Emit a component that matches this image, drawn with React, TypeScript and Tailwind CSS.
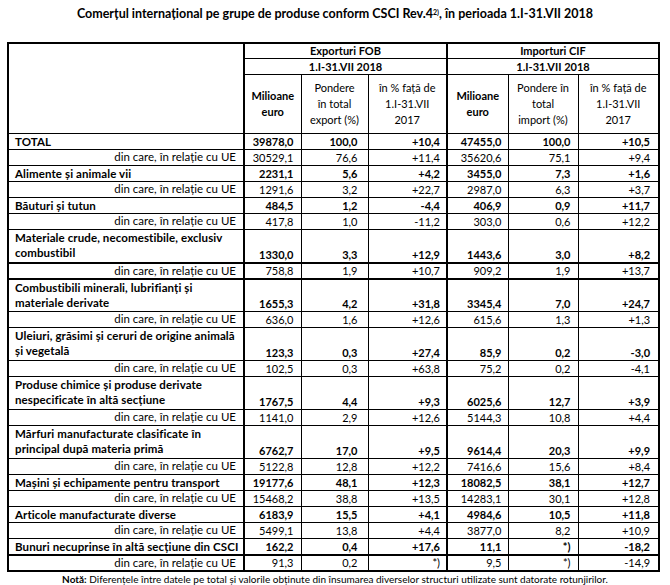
import React from 'react';

type Row = {
    label: string[];
    din?: boolean;
    thick?: boolean;
    v: string[];
};

const DIN = ['din care, în relație cu UE'];

const rows: Row[] = [
    { label: ['TOTAL'], v: ['39878,0', '100,0', '+10,4', '47455,0', '100,0', '+10,5'] },
    { label: DIN, din: true, v: ['30529,1', '76,6', '+11,4', '35620,6', '75,1', '+9,4'] },
    { label: ['Alimente și animale vii'], v: ['2231,1', '5,6', '+4,2', '3455,0', '7,3', '+1,6'] },
    { label: DIN, din: true, v: ['1291,6', '3,2', '+22,7', '2987,0', '6,3', '+3,7'] },
    { label: ['Băuturi și tutun'], v: ['484,5', '1,2', '-4,4', '406,9', '0,9', '+11,7'] },
    { label: DIN, din: true, v: ['417,8', '1,0', '-11,2', '303,0', '0,6', '+12,2'] },
    { label: ['Materiale crude, necomestibile, exclusiv', 'combustibil'], thick: true, v: ['1330,0', '3,3', '+12,9', '1443,6', '3,0', '+8,2'] },
    { label: DIN, din: true, thick: true, v: ['758,8', '1,9', '+10,7', '909,2', '1,9', '+13,7'] },
    { label: ['Combustibili minerali, lubrifianți și', 'materiale derivate'], v: ['1655,3', '4,2', '+31,8', '3345,4', '7,0', '+24,7'] },
    { label: DIN, din: true, v: ['636,0', '1,6', '+12,6', '615,6', '1,3', '+1,3'] },
    { label: ['Uleiuri, grăsimi și ceruri de origine animală', 'și vegetală'], v: ['123,3', '0,3', '+27,4', '85,9', '0,2', '-3,0'] },
    { label: DIN, din: true, v: ['102,5', '0,3', '+63,8', '75,2', '0,2', '-4,1'] },
    { label: ['Produse chimice și produse derivate', 'nespecificate în altă secțiune'], v: ['1767,5', '4,4', '+9,3', '6025,6', '12,7', '+3,9'] },
    { label: DIN, din: true, v: ['1141,0', '2,9', '+12,6', '5144,3', '10,8', '+4,4'] },
    { label: ['Mărfuri manufacturate clasificate în', 'principal după materia primă'], v: ['6762,7', '17,0', '+9,5', '9614,4', '20,3', '+9,9'] },
    { label: DIN, din: true, v: ['5122,8', '12,8', '+12,2', '7416,6', '15,6', '+8,4'] },
    { label: ['Mașini și echipamente pentru transport'], v: ['19177,6', '48,1', '+12,3', '18082,5', '38,1', '+12,7'] },
    { label: DIN, din: true, v: ['15468,2', '38,8', '+13,5', '14283,1', '30,1', '+12,8'] },
    { label: ['Articole manufacturate diverse'], v: ['6183,9', '15,5', '+4,1', '4984,6', '10,5', '+11,8'] },
    { label: DIN, din: true, v: ['5499,1', '13,8', '+4,4', '3877,0', '8,2', '+10,9'] },
    { label: ['Bunuri necuprinse în altă secțiune din CSCI'], thick: true, v: ['162,2', '0,4', '+17,6', '11,1', '*)', '-18,2'] },
    { label: DIN, din: true, v: ['91,3', '0,2', '*)', '9,5', '*)', '-14,9'] },
];

// right padding per numeric column
const pads = ['pr-[7px]', 'pr-[10px]', 'pr-[6px]', 'pr-[6px]', 'pr-[7px]', 'pr-[8px]'];

const App = () => {
    return (
        <div className="w-[670px] h-[585px] bg-white text-black font-['Lato',sans-serif] overflow-hidden">
            <h1 className="pt-[6px] h-[42px] text-center text-[12.5px] font-bold leading-[16px]">
                Comerțul internațional pe grupe de produse conform CSCI Rev.4<sup className="text-[7px]">2)</sup>, în perioada 1.I-31.VII 2018
            </h1>

            <table className="ml-[7px] w-[651px] table-fixed border-collapse border-2 border-black text-[11px] leading-[14px]">
                <colgroup>
                    <col className="w-[236px]" />
                    <col className="w-[57px]" />
                    <col className="w-[67px]" />
                    <col className="w-[79px]" />
                    <col className="w-[61px]" />
                    <col className="w-[70px]" />
                    <col className="w-[81px]" />
                </colgroup>
                <thead>
                    <tr className="h-[15px]">
                        <td rowSpan={3} className="border border-r-2 border-black"></td>
                        <td colSpan={3} className="border border-r-2 border-black text-center font-bold">Exporturi FOB</td>
                        <td colSpan={3} className="border border-black text-center font-bold">Importuri CIF</td>
                    </tr>
                    <tr className="h-[16px]">
                        <td colSpan={3} className="border border-r-2 border-black text-center font-bold">1.I-31.VII 2018</td>
                        <td colSpan={3} className="border border-black text-center font-bold">1.I-31.VII 2018</td>
                    </tr>
                    <tr className="h-[59px] leading-[16px]">
                        <td className="border border-black text-center font-bold">Milioane<br />euro</td>
                        <td className="border border-black text-center">Pondere<br />în total<br />export (%)</td>
                        <td className="border border-r-2 border-black text-center">în % față de<br />1.I-31.VII<br />2017</td>
                        <td className="border border-black text-center font-bold">Milioane<br />euro</td>
                        <td className="border border-black text-center">Pondere în<br />total<br />import (%)</td>
                        <td className="border border-black text-center">în % față de<br />1.I-31.VII<br />2017</td>
                    </tr>
                </thead>
                <tbody>
                    {rows.map((r, i) => {
                        const b = r.thick ? 'border-b-2' : '';
                        const tall = r.label.length > 1;
                        return (
                            <tr key={i} className={tall ? 'h-[33px]' : 'h-[16px]'}>
                                <td
                                    className={`border border-r-2 border-black ${b} align-top whitespace-nowrap ${
                                        r.din
                                            ? 'text-right pr-[7px] text-[11.5px]'
                                            : 'text-left pl-[6px] font-bold text-[11.5px] tracking-[0.1px] leading-[15px]'
                                    }`}
                                >
                                    {r.label.map((l, k) => (
                                        <div key={k}>{l}</div>
                                    ))}
                                </td>
                                {r.v.map((v, k) => (
                                    <td
                                        key={k}
                                        className={`border border-black ${b} ${k === 2 ? 'border-r-2' : ''} align-bottom text-right ${pads[k]} ${
                                            r.din ? '' : 'font-bold'
                                        }`}
                                    >
                                        {v}
                                    </td>
                                ))}
                            </tr>
                        );
                    })}
                </tbody>
            </table>

            <p className="mt-[1px] text-center text-[10px] leading-[12px]">
                <span className="font-bold">Notă:</span> Diferențele între datele pe total și valorile obținute din însumarea diverselor structuri utilizate sunt datorate rotunjirilor.
            </p>
        </div>
    );
};

export default App;
